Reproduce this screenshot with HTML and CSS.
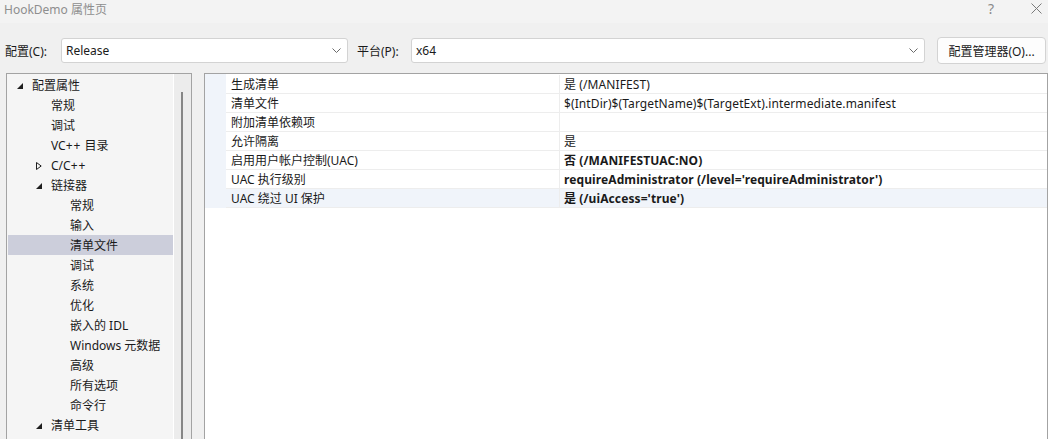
FILE: index.html
```html
<!DOCTYPE html>
<html lang="zh-CN">
<head>
<meta charset="utf-8">
<title>HookDemo 属性页</title>
<link rel="stylesheet" href="styles.css">
</head>
<body>
<div class="window">
  <header class="titlebar">
    <span class="title">HookDemo 属性页</span>
    <div class="caption-buttons">
      <span class="cap-help">?</span>
      <svg class="cap-close" width="11" height="11" viewBox="0 0 11 11"><path d="M0.5 0.5L10.5 10.5M10.5 0.5L0.5 10.5" stroke="#7a7a7a" stroke-width="1" fill="none"/></svg>
    </div>
  </header>

  <div class="toolbar">
    <span class="lbl lbl-config">配置(C):</span>
    <div class="combo combo-config">
      <span class="combo-text">Release</span>
      <svg class="chev" width="9" height="5" viewBox="0 0 9 5"><path d="M0.5 0.5L4.5 4.5L8.5 0.5" stroke="#6a6a6a" stroke-width="1" fill="none"/></svg>
    </div>
    <span class="lbl lbl-platform">平台(P):</span>
    <div class="combo combo-platform">
      <span class="combo-text">x64</span>
      <svg class="chev" width="9" height="5" viewBox="0 0 9 5"><path d="M0.5 0.5L4.5 4.5L8.5 0.5" stroke="#6a6a6a" stroke-width="1" fill="none"/></svg>
    </div>
    <button class="btn">配置管理器(O)...</button>
  </div>

  <div class="main">
    <div class="tree-panel">
      <ul class="tree">
        <li class="node lv0"><svg class="arrow" width="6" height="6" viewBox="0 0 6 6"><polygon points="6,0 6,6 0,6" fill="#1e1e1e"/></svg><span>配置属性</span></li>
        <li class="node lv1"><span class="arrow-slot"></span><span>常规</span></li>
        <li class="node lv1"><span class="arrow-slot"></span><span>调试</span></li>
        <li class="node lv1"><span class="arrow-slot"></span><span>VC<span class="plus">++</span> 目录</span></li>
        <li class="node lv1"><svg class="arrow arrow-closed" width="6" height="8" viewBox="0 0 6 8"><polygon points="0.5,0.5 5.2,4 0.5,7.5" fill="none" stroke="#1e1e1e" stroke-width="1"/></svg><span>C/C<span class="plus">++</span></span></li>
        <li class="node lv1"><svg class="arrow" width="6" height="6" viewBox="0 0 6 6"><polygon points="6,0 6,6 0,6" fill="#1e1e1e"/></svg><span>链接器</span></li>
        <li class="node lv2"><span class="arrow-slot"></span><span>常规</span></li>
        <li class="node lv2"><span class="arrow-slot"></span><span>输入</span></li>
        <li class="node lv2 selected"><span class="arrow-slot"></span><span>清单文件</span></li>
        <li class="node lv2"><span class="arrow-slot"></span><span>调试</span></li>
        <li class="node lv2"><span class="arrow-slot"></span><span>系统</span></li>
        <li class="node lv2"><span class="arrow-slot"></span><span>优化</span></li>
        <li class="node lv2"><span class="arrow-slot"></span><span>嵌入的 IDL</span></li>
        <li class="node lv2"><span class="arrow-slot"></span><span>Windows 元数据</span></li>
        <li class="node lv2"><span class="arrow-slot"></span><span>高级</span></li>
        <li class="node lv2"><span class="arrow-slot"></span><span>所有选项</span></li>
        <li class="node lv2"><span class="arrow-slot"></span><span>命令行</span></li>
        <li class="node lv1"><svg class="arrow" width="6" height="6" viewBox="0 0 6 6"><polygon points="6,0 6,6 0,6" fill="#1e1e1e"/></svg><span>清单工具</span></li>
      </ul>
      <div class="tree-sep"></div>
      <div class="vscroll"><div class="thumb"></div></div>
    </div>

    <div class="grid-panel">
      <div class="prop-grid">
        <div class="prop-row"><div class="gutter"></div><div class="name">生成清单</div><div class="value">是 (/MANIFEST)</div></div>
        <div class="prop-row"><div class="gutter"></div><div class="name">清单文件</div><div class="value">$(IntDir)$(TargetName)$(TargetExt).intermediate.manifest</div></div>
        <div class="prop-row"><div class="gutter"></div><div class="name">附加清单依赖项</div><div class="value"></div></div>
        <div class="prop-row"><div class="gutter"></div><div class="name">允许隔离</div><div class="value">是</div></div>
        <div class="prop-row"><div class="gutter"></div><div class="name">启用用户帐户控制(UAC)</div><div class="value bold">否 (/MANIFESTUAC:NO)</div></div>
        <div class="prop-row"><div class="gutter"></div><div class="name">UAC 执行级别</div><div class="value bold">requireAdministrator (/level='requireAdministrator')</div></div>
        <div class="prop-row selected"><div class="gutter"></div><div class="name">UAC 绕过 UI 保护</div><div class="value bold">是 (/uiAccess='true')</div></div>
      </div>
    </div>
  </div>
</div>
</body>
</html>
```

FILE: styles.css
```css
* { box-sizing: border-box; }
html, body { margin: 0; padding: 0; }
body {
  width: 1048px;
  height: 439px;
  overflow: hidden;
  background: #f0f0f0;
  font-family: "Noto Sans", "Noto Sans CJK SC", sans-serif;
  font-size: 12px;
  color: #1a1a1a;
}
.window { display: flex; flex-direction: column; height: 439px; }

/* title bar */
.titlebar {
  flex: none;
  height: 23px;
  display: flex;
  justify-content: space-between;
  align-items: flex-start;
  background: #f3f3f3;
}
.title { padding-left: 4px; line-height: 20px; color: #8e8e8e; }
.caption-buttons { display: flex; align-items: flex-start; padding-right: 6px; }
.cap-help { color: #8a8a8a; font-size: 14px; line-height: 18px; margin-right: 37px; }
.cap-close { margin-top: 3px; }

/* toolbar */
.toolbar {
  flex: none;
  height: 50px;
  display: flex;
  align-items: center;
  padding: 14px 2px 9px 5px;
}
.lbl { flex: none; white-space: nowrap; color: #1a1a1a; }
.lbl-config { width: 56px; }
.lbl-platform { width: 54px; margin-left: 9px; }
.combo {
  height: 25px;
  display: flex;
  align-items: center;
  justify-content: space-between;
  background: #fff;
  border: 1px solid #d3d3d3;
  border-radius: 3px;
  padding: 0 6px 0 4px;
}
.combo-config { width: 287px; flex: none; }
.combo-platform { flex: 1; min-width: 0; }
.chev { flex: none; }
.btn {
  flex: none;
  margin-left: 12px;
  width: 109px;
  height: 27px;
  background: #fdfdfd;
  border: 1px solid #d3d3d3;
  border-radius: 4px;
  font: inherit;
  color: #1a1a1a;
  padding: 0;
}

/* main */
.main {
  flex: 1;
  min-height: 0;
  display: flex;
  gap: 12px;
  padding-left: 6px;
}
.tree-panel {
  flex: none;
  width: 186px;
  display: flex;
  border: 1px solid #a3a3a3;
  border-bottom: none;
  background: #f5f5f5;
}
.tree {
  width: 166px;
  list-style: none;
  margin: 0;
  padding: 1px 0 0 1px;
}
.node {
  height: 20px;
  display: flex;
  align-items: center;
  line-height: 21px;
  white-space: nowrap;
}
.plus { letter-spacing: 1px; }
.node.lv0 { padding-left: 9px; }
.node.lv1 { padding-left: 28px; }
.node.lv2 { padding-left: 47px; }
.node.selected { background: #cccedb; }
.arrow, .arrow-slot { flex: none; width: 15px; }
.arrow { margin-right: 9px; width: 6px; margin-top: 2px; }
.arrow-closed { margin-top: 1px; }
.tree-sep { flex: none; width: 1px; background: #fff; }
.vscroll {
  flex: none;
  width: 17px;
  background: #ececec;
  padding: 18px 0 0 7px;
}
.thumb { width: 2px; height: 100%; background: #868686; }

.grid-panel {
  flex: 1;
  min-width: 0;
  border: 1px solid #a3a3a3;
  border-bottom: none;
  background: #fff;
}
.prop-grid {
  padding-top: 1px;
  background: linear-gradient(90deg, #f0f4fa 0, #f0f4fa 21px, transparent 21px);
}
.prop-row {
  display: grid;
  grid-template-columns: 21px 334px 1fr;
}
.name, .value {
  height: 19px;
  line-height: 20px;
  border-bottom: 1px solid #ededed;
  white-space: nowrap;
  overflow: hidden;
}
.name { padding-left: 5px; border-right: 1px solid #ededed; }
.value { padding-left: 4px; letter-spacing: 0.1px; }
.bold { font-weight: bold; }
.prop-row.selected .name, .prop-row.selected .value { background: #f0f4fa; }
```
